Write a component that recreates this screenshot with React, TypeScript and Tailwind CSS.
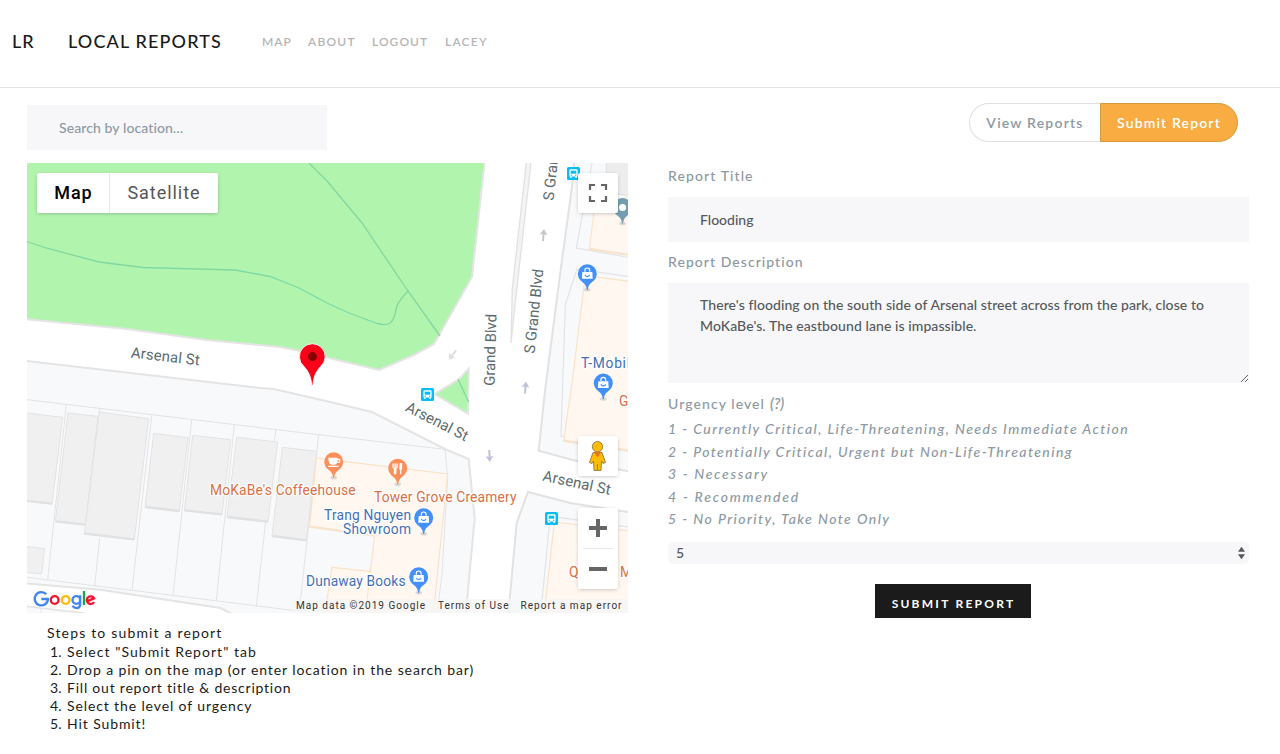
import type { ReactNode } from "react";

const LATO = "font-['Lato','Noto_Sans',sans-serif]";

const NAV = [
  { label: "MAP", cls: "w-[46px] tracking-[0.95px]" },
  { label: "ABOUT", cls: "w-[64px] tracking-[1.2px]" },
  { label: "LOGOUT", cls: "w-[73px] tracking-[1.05px]" },
  { label: "LACEY", cls: "tracking-[1.2px]" },
];

const STEPS = [
  { text: 'Select "Submit Report" tab', cls: "tracking-[1.04px]" },
  { text: "Drop a pin on the map (or enter location in the search bar)", cls: "tracking-[0.9px]" },
  { text: "Fill out report title & description", cls: "tracking-[0.78px]" },
  { text: "Select the level of urgency", cls: "tracking-[0.88px]" },
  { text: "Hit Submit!", cls: "tracking-[0.9px]" },
];

const LEVELS = [
  { text: "1 - Currently Critical, Life-Threatening, Needs Immediate Action", cls: "tracking-[1.44px]" },
  { text: "2 - Potentially Critical, Urgent but Non-Life-Threatening", cls: "tracking-[1.43px]" },
  { text: "3 - Necessary", cls: "tracking-[1.7px]" },
  { text: "4 - Recommended", cls: "tracking-[1.78px]" },
  { text: "5 - No Priority, Take Note Only", cls: "tracking-[1.46px]" },
];

function Pin({ x, y, color, children }: { x: number; y: number; color: string; children?: ReactNode }) {
  return (
    <g transform={`translate(${x} ${y})`}>
      <ellipse cx="0" cy="16" rx="3.4" ry="1.8" fill="#000" opacity="0.13" />
      <path d="M-0.5 16.3 C-1 11 -3 9.5 -6.2 7.2 A9.5 9.5 0 1 1 6.2 7.2 C3 9.5 1 11 0.5 16.3Z" fill={color} />
      {children}
    </g>
  );
}

function ShopPin({ x, y }: { x: number; y: number }) {
  return (
    <Pin x={x} y={y} color="#4190fb">
      <path d="M-5 -1.8H5L5.4 5H-5.4Z" fill="#fff" />
      <path d="M-2.4 -2V-3.3A2.4 2.4 0 0 1 2.4 -3.3V-2" fill="none" stroke="#fff" strokeWidth="1.2" />
      <path d="M-2.4 1.2A2.5 2.3 0 0 0 2.4 1.2" fill="none" stroke="#4190fb" strokeWidth="1.2" />
    </Pin>
  );
}

function Bus({ x, y }: { x: number; y: number }) {
  return (
    <g transform={`translate(${x} ${y})`}>
      <rect width="13" height="13" rx="1.5" fill="#05bdfb" />
      <path d="M3.6 2.2H9.4Q10.6 2.2 10.6 3.6V9.6H9.8V11H8.4V9.6H4.6V11H3.2V9.6H2.4V3.6Q2.4 2.2 3.6 2.2Z" fill="#fff" />
      <rect x="3.7" y="3.7" width="5.6" height="3" fill="#05bdfb" />
      <rect x="3.7" y="7.8" width="1.3" height="1" fill="#05bdfb" />
      <rect x="8" y="7.8" width="1.3" height="1" fill="#05bdfb" />
    </g>
  );
}

function Arrow({ x, y, angle, color }: { x: number; y: number; angle: number; color: string }) {
  return (
    <path
      transform={`translate(${x} ${y}) rotate(${angle})`}
      d="M0 -6L3.8 -0.2L1 -0.8V6H-1V-0.8L-3.8 -0.2Z"
      fill={color}
    />
  );
}

function GoogleLogo() {
  const parts = [
    { d: "M58 619A20 20 0 1 0 63 633H43", c: "#4285f4" },
    { d: "M83 624.500A11.500 11.500 0 1 0 83 647.500A11.500 11.500 0 1 0 83 624.500", c: "#f5122e" },
    { d: "M116 624.500A11.500 11.500 0 1 0 116 647.500A11.500 11.500 0 1 0 116 624.500", c: "#fbbc05" },
    { d: "M148 624.500A11.500 11.500 0 1 0 148 647.500A11.500 11.500 0 1 0 148 624.500M159.500 622V647Q159.500 660 148 660Q140 660 137 653", c: "#4285f4" },
    { d: "M171 609V651", c: "#10a855" },
    { d: "M180 640L201 631A11.500 11.500 0 1 0 201 642", c: "#f5122e" },
  ];
  return (
    <g transform="translate(27 388) scale(0.33333)" fill="none">
      {parts.map((p, i) => (
        <path key={i} d={p.d} stroke="#fff" strokeWidth="12" />
      ))}
      {parts.map((p, i) => (
        <path key={i} d={p.d} stroke={p.c} strokeWidth="7" />
      ))}
    </g>
  );
}

const HALO = { stroke: "#fff", strokeWidth: 2.5, strokeLinejoin: "round", paintOrder: "stroke" } as const;

function MapCanvas() {
  return (
    <svg className="block h-[450px] w-[601px] font-['Roboto',sans-serif]" viewBox="27 163 601 450">
      <rect x="27" y="163" width="601" height="450" fill="#fff" />
      <path d="M20 155H485.300L484.500 163L472 277L434 344L414 355L379 370L300 351L280 347L207 340L127 329L20 318.500Z" fill="#b1f4ad" stroke="#e4e4e4" strokeWidth="2" />
      <g fill="none" stroke="#82d8a0" strokeWidth="1.300">
        <path d="M309 163L327 181L362 223L408 291L440 336" />
        <path d="M27 241.500L46 248L99 262L143 267.500L235 270L270 276.500L299 288L327 303L349 313L377 323.500Q386 326 390 323C397 318 394 309 399 302Q402 297 408 291" />
      </g>

      <g transform="translate(27 388) scale(0.33333)" stroke="#e2e3e5" strokeWidth="3">
        <path d="M-20 -83L700 0L740 3L900 40L1035 72L1254 183L1325 213L1343 392L1315 690H640L580 660L220 605L-20 585Z" fill="#f8f9fb" stroke="#e4e4e4" strokeWidth="6" />
        <path d="M-20 653L170 675L190 700H-20Z" fill="#f8f9fb" stroke="#e4e4e4" strokeWidth="5" />
        <path d="M0 35L875 140L1254 184L1262 270L1245 560L1230 675M0 568L315 607L565 638L820 670M118 50L62 575M218 62L214 100M218 450L203 594M374 82L315 607M494 96L438 624M622 110L568 638M746 126L688 655M875 140L820 640M42 660V675" fill="none" />
        <g fill="#f0f0f0">
          <path d="M-10 74L107 88L75 348L-10 338Z" />
          <path d="M123 75L213 85L175 410L85 400Z" />
          <path d="M217 72L365 92L322 455L172 438Z" />
          <path d="M380 136L483 149L457 370L354 358Z" />
          <path d="M497 142L611 155L585 380L472 368Z" />
          <path d="M629 148L752 162L723 402L600 388Z" />
          <path d="M766 178L869 190L838 458L735 445Z" />
          <path d="M-10 474L53 482L44 558L-10 552Z" />
        </g>
        <path d="M-5 338L75 347M86 400L175 410M173 437L322 454M355 357L457 369M473 367L585 379M601 387L723 401M736 444L838 457" stroke="#e0e1e2" strokeWidth="7" fill="none" />
      </g>

      <g transform="translate(327 163) scale(0.33333)">
        <path d="M742 -10L738 50L705 290L655 675L635 863L760 897L915 927V-10Z" fill="#f8f9fb" stroke="#e2e2e2" strokeWidth="6" />
        <path d="M599 -10L556 375L552 540L567 400L613 -10Z" fill="#f4f4f4" stroke="#e2e2e2" strokeWidth="4" />
        <path d="M838 -5V92L910 97V-5Z" fill="#ededee" stroke="#dddddd" strokeWidth="3" />
        <path d="M795 0L748 255L910 284M910 342L750 318L715 425L702 820L710 820" fill="none" stroke="#e2e3e6" strokeWidth="3.500" />
        <path d="M803 130L787 258L910 276V100Z" fill="#fff7f0" stroke="#fbe4cc" strokeWidth="3.500" />
        <path d="M787 258L910 276" stroke="#f8e3cf" strokeWidth="7" />
        <path d="M775 338L910 355V865L710 835L735 660Z" fill="#fff7f0" stroke="#fbe2c6" strokeWidth="3.500" />
        <path d="M710 833L910 864" stroke="#f8e3cf" strokeWidth="7" />
      </g>

      <g transform="translate(327 388) scale(0.33333)">
        <path d="M543 690L569 405L603 312L730 345L915 374V690Z" fill="#f8f9fb" stroke="#e2e2e2" strokeWidth="6" />
        <path d="M640 690L668 400L672 385L915 418" fill="none" stroke="#e2e3e6" strokeWidth="3.500" />
        <path d="M682 402L915 430V690H650Z" fill="#fff7f0" stroke="#fbe2c6" strokeWidth="3.500" />
        <path d="M-32 210L50 220L362 258L318 690H-8L15 538L130 550L143 442L-52 416Z" fill="#fff7f0" stroke="#fbe2c6" strokeWidth="3.500" />
        <path d="M130 550L116 675" stroke="#fbe2c6" strokeWidth="3" />
        <path d="M-52 416L143 443" stroke="#f8e3cf" strokeWidth="7" />
        <path d="M322 18L395 -25L425 -58L423 77Z" fill="#b1f4ad" stroke="#e4e4e4" strokeWidth="6" />
        <path d="M393 -27L425 43" stroke="#82d8a0" strokeWidth="4" />
      </g>

      <Arrow x={543.5} y={235} angle={5} color="#c3c7c7" />
      <Arrow x={525.5} y={387.5} angle={5} color="#bfc2d8" />
      <Arrow x={489.5} y={456} angle={178} color="#bfc2d8" />
      <Arrow x={452.5} y={355} angle={218} color="#dcdfe2" />
      <Bus x={567} y={167} />
      <Bus x={421} y={388} />
      <Bus x={545} y={512} />

      <g fill="#5c6b71" fontSize="15" {...HALO}>
        <text transform="translate(130.500 357.500) rotate(6.500)" textLength="69">Arsenal St</text>
        <text transform="translate(404.500 410.500) rotate(27)" textLength="68">Arsenal St</text>
        <text transform="translate(542 480.500) rotate(12)" textLength="69">Arsenal St</text>
        <text transform="translate(494.500 386) rotate(-88.500)" textLength="72">Grand Blvd</text>
        <text transform="translate(534.500 354) rotate(-84)" textLength="85">S Grand Blvd</text>
        <text transform="translate(553.500 201) rotate(-84)" textLength="85">S Grand Blvd</text>
      </g>

      <ShopPin x={587.3} y={273.7} />
      <ShopPin x={603.3} y={383} />
      <ShopPin x={423.7} y={517.7} />
      <ShopPin x={418.7} y={576.7} />
      <Pin x={622.5} y={207.5} color="#739eb2">
        <circle r="3.600" fill="#fff" />
      </Pin>
      <Pin x={333.7} y={461.7} color="#ff8f5a">
        <path d="M-5.500 -4H4V-3H6.500V1H3.500Q2.500 3 0.500 3H-2Q-5.500 2 -5.500 -4Z" fill="#fff" />
        <path d="M4 -1.800H5.200V0H3.900Z" fill="#ff8f5a" />
        <rect x="-5.500" y="4" width="10.500" height="1.300" fill="#fff" />
      </Pin>
      <Pin x={397.7} y={468.3} color="#ff8f5a">
        <path d="M-4.600 -4.800V-1.500Q-4.600 0 -3.200 0V6M-2.600 -4.800V0M-0.600 -4.800V-1.500Q-0.600 0 -2 0V6M3 -4.800V6" fill="none" stroke="#fff" strokeWidth="1.300" />
        <path d="M3 -5H4.400V1.200H1.600V-3.600Q1.600 -5 3 -5Z" fill="#fff" />
      </Pin>

      <g fill="#dc6f43" fontSize="13.800" {...HALO}>
        <text x="210" y="495" textLength="145.500">MoKaBe's Coffeehouse</text>
        <text x="374" y="502" textLength="142.500">Tower Grove Creamery</text>
        <text x="569" y="577">Q</text>
        <text x="620" y="577">M</text>
        <text x="619" y="406">G</text>
      </g>
      <g fill="#3f70b8" fontSize="13.800" {...HALO}>
        <text x="324" y="520" textLength="87">Trang Nguyen</text>
        <text x="343" y="534" textLength="68">Showroom</text>
        <text x="306" y="586" textLength="99.500">Dunaway Books</text>
        <text x="581" y="368" textLength="57">T-Mobile</text>
      </g>

      <path d="M311.700 385.500C311.200 377 308.500 371.500 304 366.500A12.900 12.900 0 1 1 320.600 366.500C316.100 371.500 313.400 377 312.900 385.500Z" fill="#fc0019" stroke="#fff" strokeWidth="0.900" />
      <circle cx="312.400" cy="356.600" r="4.500" fill="#8a0000" />

      <rect x="292" y="599" width="336" height="14" fill="#f5f5f5" opacity="0.750" />
      <g fill="#333" fontSize="10">
        <text x="296" y="609" textLength="129">Map data ©2019 Google</text>
        <text x="438" y="609" textLength="70.500">Terms of Use</text>
        <text x="520.500" y="609" textLength="101">Report a map error</text>
      </g>
      <GoogleLogo />
    </svg>
  );
}

function MapPanel() {
  const box = "absolute bg-white rounded-[2px] shadow-[0_1px_4px_-1px_rgba(0,0,0,0.3)]";
  return (
    <div className="relative mt-[13px] h-[450px] w-[601px] overflow-hidden">
      <MapCanvas />
      <div className={`${box} left-[10px] top-[10px] flex h-10 w-[181px] items-center font-['Roboto',sans-serif] text-[18px]`}>
        <button className="h-full w-[73px] border-r border-[#e6e6e6] pb-[1px] pl-[1px] font-medium tracking-[0.9px] text-black">Map</button>
        <button className="h-full grow pb-[1px] tracking-[0.95px] text-[#565656]">Satellite</button>
      </div>
      <button className={`${box} left-[551px] top-[10px] size-10`}>
        <svg className="size-10" viewBox="0 0 40 40">
          <path d="M12 17V12H17M23 12H28V17M28 23V28H23M17 28H12V23" fill="none" stroke="#666" strokeWidth="2.200" />
        </svg>
      </button>
      <button className={`${box} left-[551px] top-[273px] size-10`}>
        <svg className="size-10" viewBox="0 0 40 40">
          <path d="M15 16.500H24L27.500 26.500L25 27.500L23.500 25L23 34.500H16L15.500 25L14 27.500L11.500 26.500Z" fill="#fdbb03" stroke="#8a7a4a" strokeWidth="0.900" />
          <path d="M15.500 16H23.500L19.600 21.500Z" fill="#e8761b" />
          <path d="M19.500 28V34" stroke="#8a7a4a" strokeWidth="0.900" />
          <circle cx="19.500" cy="10.700" r="5.200" fill="#fdbb03" stroke="#8a7a4a" strokeWidth="0.900" />
        </svg>
      </button>
      <div className={`${box} left-[551px] top-[345px] h-[81px] w-10`}>
        <svg className="h-[81px] w-10" viewBox="0 0 40 81">
          <path d="M11 20H29M20 11V29M11 61H29" stroke="#666" strokeWidth="4" />
          <path d="M5 40.500H35" stroke="#e6e6e6" />
        </svg>
      </div>
    </div>
  );
}

export default function App() {
  return (
    <div className={`h-[754px] overflow-hidden bg-white text-[14px] text-[#1b1b1b] ${LATO}`}>
      <header className="flex h-[88px] items-center border-b border-[#e2e2e2] pb-[4px] pl-[12px]">
        <a className="w-[56px] text-[18px] font-medium tracking-[1px]">LR</a>
        <a className="w-[194px] text-[18px] font-medium tracking-[1.14px]">LOCAL REPORTS</a>
        <nav className="flex text-[12px] font-semibold text-[#b6b6b6]">
          {NAV.map((n) => (
            <a key={n.label} className={n.cls}>{n.label}</a>
          ))}
        </nav>
      </header>

      <main className="flex">
        <section className="w-[641px] pl-[27px] pt-[17px]">
          <div className="flex h-[45px] w-[300px] items-center bg-[#f7f7f9] pb-[1px] pl-8 font-medium tracking-[0.09px] text-[#8d99a3] [font-variant-ligatures:none]">
            Search by location...
          </div>
          <MapPanel />
          <div className="pl-[20px] pt-[11px] leading-[18px]">
            <p className="mb-[1px] tracking-[1.17px]">Steps to submit a report</p>
            <ol>
              {STEPS.map((s, i) => (
                <li key={i} className="flex">
                  <span className="w-[20px] pl-[3px]">{i + 1}.</span>
                  <span className={s.cls}>{s.text}</span>
                </li>
              ))}
            </ol>
          </div>
        </section>

        <section className="w-[608px] pl-[27px] pt-[15px]">
          <div className="mr-[11px] flex h-[39px] justify-end font-semibold">
            <button className="w-[131px] rounded-l-[20px] border border-r-0 border-[#dfdfdf] pb-[1px] tracking-[1.2px] text-[#8d99a3]">View Reports</button>
            <button className="w-[138px] rounded-r-[20px] border border-[#dc983b] bg-[#f9ac41] pb-[1px] tracking-[1.15px] text-white">Submit Report</button>
          </div>

          <label className="mt-[23px] block h-[21px] font-medium leading-[21px] tracking-[1.1px] text-[#8d99a3]">Report Title</label>
          <div className="mt-[11px] flex h-[45px] w-[581px] items-center bg-[#f7f7f9] pb-[1px] pl-8 font-medium text-[#55595c]">Flooding</div>
          <label className="mt-[9px] block h-[21px] font-medium leading-[21px] tracking-[1.05px] text-[#8d99a3]">Report Description</label>
          <textarea
            className="mt-[11px] block h-[100px] w-[581px] bg-[#f7f7f9] px-8 py-[11px] font-medium leading-[21px] tracking-[0.08px] text-[#55595c] outline-none"
            defaultValue={"There's flooding on the south side of Arsenal street across from the park, close to MoKaBe's. The eastbound lane is impassible."}
          />
          <div className="mt-[10px] flex h-[21px] font-medium leading-[21px] text-[#8d99a3]">
            <span className="w-[102px] tracking-[1.07px]">Urgency level</span>
            <em className="text-[15px] font-semibold">(?)</em>
          </div>
          <ul className="mt-[4px] font-medium italic leading-[22.5px] text-[#8d99a3]">
            {LEVELS.map((l, i) => (
              <li key={i} className={l.cls}>{l.text}</li>
            ))}
          </ul>
          <div className="mt-[11.5px] flex h-[22px] w-[581px] items-center justify-between rounded-[5px] bg-[#f7f7f9] pl-2 pr-[4px] font-medium text-[#55595c]">
            <span className="pb-[2px]">5</span>
            <svg className="h-[14px] w-[7px]" viewBox="0 0 7 14">
              <path d="M0 5.700L3.500 0.700L7 5.700ZM0 8.300L3.500 13.300L7 8.300Z" fill="#55595c" />
            </svg>
          </div>
          <button className="ml-[207px] mt-[20px] block h-[34px] w-[156px] bg-[#1b1b1b] pl-[1px] pt-[5px] text-[12px] font-bold tracking-[2.25px] text-white">SUBMIT REPORT</button>
        </section>
      </main>
    </div>
  );
}
